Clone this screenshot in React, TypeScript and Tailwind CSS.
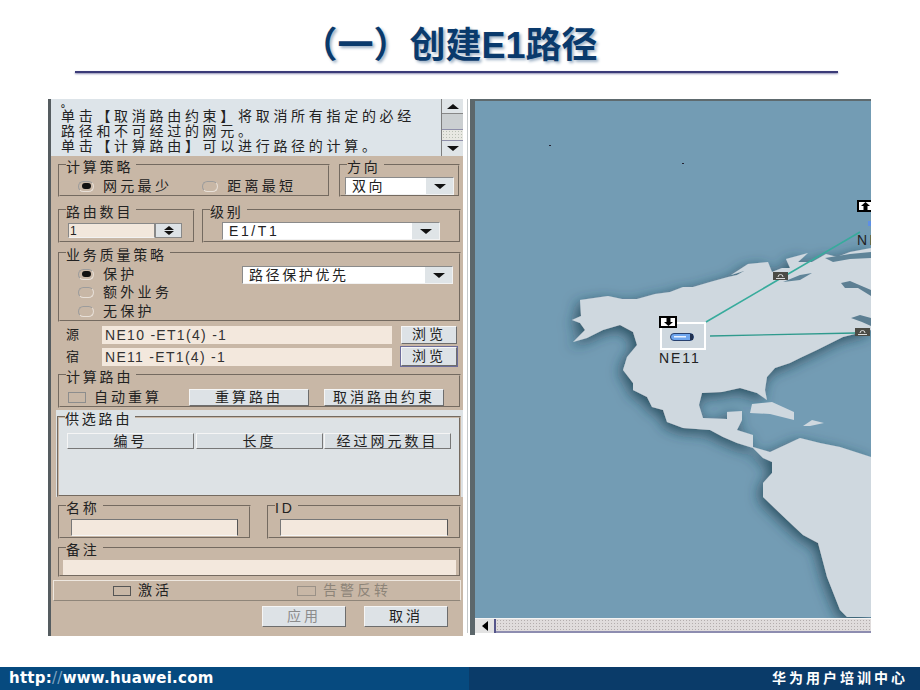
import type { ReactNode } from "react";

const cjk = "font-['Liberation_Sans','Noto_Sans_CJK_SC',sans-serif]";

function Caret() {
  return <span className="block w-0 h-0 border-x-[6px] border-x-transparent border-t-[5px] border-t-[#111]" />;
}

function Group({ label, className, children }: { label: string; className: string; children?: ReactNode }) {
  return (
    <fieldset className={`border-2 border-[#c8b7a6] [border-style:groove] ${className}`}>
      <legend className="relative top-[2px] ml-[6px] pr-[3px] text-[14px] leading-[14px] tracking-[2.8px] text-[#222]">{label}</legend>
      {children}
    </fieldset>
  );
}

function Combo({ value, className }: { value: string; className: string }) {
  return (
    <div className={`flex items-stretch h-[18px] border border-[#8a8a8a] border-b-[#f2f2f2] border-r-[#f2f2f2] bg-white ${className}`}>
      <span className="flex-1 pl-[6px] text-[14px] leading-[16px] tracking-[2.6px] text-[#222]">{value}</span>
      <span className="flex w-[27px] items-center justify-center bg-[#dfe4e7]"><Caret /></span>
    </div>
  );
}

function Radio({ on, label }: { on?: boolean; label: string }) {
  return (
    <div className="flex h-[18.5px] items-center gap-[9px]">
      <span className="flex h-[11px] w-[16px] items-center justify-center rounded-full border border-[#9c9c9c] border-b-[#e8e0d8] border-r-[#e8e0d8]">
        {on && <span className="h-[6px] w-[9px] rounded-full bg-[#111]" />}
      </span>
      <span className="text-[14px] tracking-[3.3px] text-[#222]">{label}</span>
    </div>
  );
}

function Btn({ label, className, disabled }: { label: string; className: string; disabled?: boolean }) {
  return (
    <div className={`flex items-center justify-center border border-[#f5f5f5] border-b-[#6d6d6d] border-r-[#6d6d6d] bg-[#dde2e6] text-[14px] tracking-[3px] ${disabled ? "text-[#8c8c8c]" : "text-[#222]"} ${className}`}>
      {label}
    </div>
  );
}

function Tag() {
  return (
    <svg width="15" height="8" viewBox="0 0 15 8" className="block">
      <rect width="15" height="8" fill="#4b4b45" />
      <path d="M5 5 a2.5 2.5 0 1 1 5 0 M3 6.5h9" stroke="#ddd" strokeWidth="1" fill="none" />
    </svg>
  );
}

function MapPane() {
  const na =
    "572,320 581,316 580,300 594,298 608,296 622,299 637,299 655,294 670,292 683,287 693,287 710,282 728,277 737,275 744,271 731,275 748,264 768,262 772,272 782,268 790,268 786,259 808,253 798,262 812,262 826,254 837,257 850,252 871,248 871,330 843,337 817,350 800,358 790,363 775,368 767,377 765,390 767,400 757,393 740,388 722,392 702,393 699,405 703,418 727,419 727,412 742,411 742,420 737,430 753,435 753,447 770,452 785,445 800,438 820,443 840,447 871,457 871,617 847,617 840,610 827,577 818,543 803,535 787,520 763,497 763,483 772,473 772,462 763,458 753,448 737,443 723,437 710,430 683,428 667,422 663,410 652,407 647,397 633,390 633,383 623,370 627,357 637,345 633,332 620,325 603,330 587,338 573,342 585,330 580,323";
  return (
    <div className="relative h-[534px] w-[396px] overflow-hidden border-t-[2px] border-t-[#5e6a6e] bg-[#739cb4]">
      <svg viewBox="475 101 396 532" className="absolute inset-0 h-full w-full">
        <defs>
          <filter id="s" x="-20%" y="-20%" width="140%" height="140%">
            <feDropShadow dx="-3" dy="4" stdDeviation="7" floodColor="#1f3a49" floodOpacity="0.8" />
          </filter>
        </defs>
        <polygon points={na} fill="#cfd8df" filter="url(#s)" />
        <polygon points="750,413 752,404 772,402 794,412 794,420 770,414" fill="#cfd8df" />
        <polygon points="803,426 812,420 824,423 810,426" fill="#cfd8df" />
        <polygon points="841,283 850,281 871,290 871,296 858,288 845,288" fill="#5d7f93" />
        <polygon points="851,318 860,315 871,318 871,326 862,322" fill="#5d7f93" />
        <polygon points="825,258 850,254 871,252 871,258 850,259 833,262" fill="#5f8498" />
        <polygon points="783,282 800,275 812,273 800,280" fill="#5f8498" />
        <line x1="706" y1="322" x2="860" y2="232" stroke="#37ab9c" strokeWidth="1.6" />
        <line x1="710" y1="336" x2="856" y2="333" stroke="#2f9a8d" strokeWidth="1.3" />
        <rect x="549" y="145" width="2" height="1" fill="#223" />
        <rect x="682" y="163" width="2" height="1" fill="#223" />
      </svg>
      <div className="absolute left-[298px] top-[171px]"><Tag /></div>
      <div className="absolute left-[380px] top-[227px]"><Tag /></div>

      <div className="absolute left-[382px] top-[99px] flex h-[12px] w-[16px] items-center justify-center border-2 border-black bg-white">
        <svg width="9" height="8" viewBox="0 0 9 8"><path d="M4.5 0 L9 4 H6.5 V8 H2.5 V4 H0 Z" fill="#000" /></svg>
      </div>
      <div className="absolute left-[393px] top-[120px] h-[5px] w-[4px] bg-[#5d8fe6]" />
      <div className="absolute left-[382px] top-[129px] text-[14px] tracking-[2.5px] text-[#222] font-['Liberation_Sans',sans-serif]">NE</div>

      <div className="absolute left-[185px] top-[221px] flex h-[28px] w-[46px] items-center justify-center border-2 border-white">
        <svg width="24" height="8" viewBox="0 0 24 8" className="ml-[-2px] mt-[2px]">
          <rect x="0.5" y="0.5" width="23" height="7" rx="3.5" fill="#6fa6ee" stroke="#27406e" />
          <rect x="4" y="3" width="12" height="1.5" fill="#e8f2ff" />
          <rect x="20" y="1" width="3" height="6" fill="#20304f" />
        </svg>
      </div>
      <div className="absolute left-[184px] top-[215px] flex h-[12px] w-[18px] items-center justify-center border-2 border-black bg-white">
        <svg width="9" height="8" viewBox="0 0 9 8"><path d="M4.5 8 L9 4 H6.5 V0 H2.5 V4 H0 Z" fill="#000" /></svg>
      </div>
      <div className="absolute left-[184px] top-[247px] text-[14px] tracking-[1.9px] text-[#222] font-['Liberation_Sans',sans-serif]">NE11</div>

      <div className="absolute inset-x-0 bottom-0 flex h-[15px] border-t border-[#f3f3f3] bg-[#d8d4d4]">
        <div className="flex w-[21px] items-center justify-center border-r-2 border-r-[#55558a] bg-[#e3e3e3]">
          <span className="block h-0 w-0 border-y-[5px] border-r-[6px] border-y-transparent border-r-black" />
        </div>
        <div className="flex-1 border-b-2 border-b-[#8d8db0] bg-[radial-gradient(#b3adad_1px,#e0dcdc_1px)] bg-[length:3px_3px]" />
      </div>
    </div>
  );
}

function Panel() {
  return (
    <div className="flex h-[537px] w-[415px] flex-col border-l-[3px] border-l-[#555c60] bg-[#c8b7a6] text-[#222]">
      <div className="flex h-[57px] bg-[#dde4e9]">
        <div className="flex-1 overflow-hidden pl-[10px] text-[14px] leading-[15px] tracking-[3.7px] text-[#222]">
          <div className="h-[10px] text-[10px] font-bold leading-[10px]">。</div>
          <div>单击【取消路由约束】将取消所有指定的必经</div>
          <div>路径和不可经过的网元。</div>
          <div>单击【计算路由】可以进行路径的计算。</div>
        </div>
        <div className="flex w-[22px] flex-col border-l border-[#7d7d7d] bg-[#dfe4e7]">
          <div className="flex h-[15px] items-center justify-center border-b border-[#888]">
            <span className="block h-0 w-0 border-x-[6px] border-b-[5px] border-x-transparent border-b-[#111]" />
          </div>
          <div className="h-[15px] bg-[#cbcfd1]" />
          <div className="h-[12px] border-y border-[#8f8faa] bg-[radial-gradient(#b9bfb4_1px,#e8e8e2_1px)] bg-[length:3px_3px]" />
          <div className="flex flex-1 items-center justify-center"><Caret /></div>
        </div>
      </div>

      <div className="mt-[2px] flex gap-[9px] pl-[7px] pr-[2px]">
        <Group label="计算策略" className="h-[39px] w-[272px]">
          <div className="flex gap-[30px] pl-[18px] pt-[5px]"><Radio on label="网元最少" /><Radio label="距离最短" /></div>
        </Group>
        <Group label="方向" className="h-[39px] w-[121px]">
          <div className="pl-[4px] pr-[4px] pt-[5px]"><Combo value="双向" className="" /></div>
        </Group>
      </div>

      <div className="mt-[6px] flex gap-[7px] pl-[7px] pr-[2px]">
        <Group label="路由数目" className="h-[40px] w-[137px]">
          <div className="flex pl-[8px] pt-[6px]">
            <span className="h-[15px] w-[87px] border border-[#888] border-b-[#f2f2f2] bg-[#f2e7dc] pl-[1px] text-[12px] leading-[14px] font-['Liberation_Sans',sans-serif]">1</span>
            <span className="flex h-[15px] w-[27px] flex-col items-center justify-center gap-[1px] border border-[#888] bg-[#dde2e6]">
              <span className="block h-0 w-0 border-x-[5px] border-b-[4px] border-x-transparent border-b-[#111]" />
              <span className="block h-0 w-0 border-x-[5px] border-t-[4px] border-x-transparent border-t-[#111]" />
            </span>
          </div>
        </Group>
        <Group label="级别" className="h-[40px] w-[259px]">
          <div className="pl-[18px] pr-[19px] pt-[5px]"><Combo value="E1/T1" className="" /></div>
        </Group>
      </div>

      <div className="mt-[3px] pl-[7px] pr-[2px]">
        <Group label="业务质量策略" className="h-[76px] w-[403px]">
          <div className="flex items-start pl-[18px] pr-[6px]">
            <div className="flex w-[164px] flex-col pt-[5px]">
              <Radio on label="保护" /><Radio label="额外业务" /><Radio label="无保护" />
            </div>
            <Combo value="路径保护优先" className="flex-1 mt-[6px]" />
          </div>
        </Group>
      </div>

      <div className="mt-[3px] flex h-[19px] items-center pl-[15px]">
        <span className="w-[36px] text-[13px]">源</span>
        <span className="h-[18px] w-[290px] bg-[#f3e8dd] pl-[3px] text-[14px] leading-[18px] tracking-[1.3px] text-[#333] font-['Liberation_Sans',sans-serif]">NE10 -ET1(4) -1</span>
        <Btn label="浏览" className="ml-[9px] h-[18px] w-[56px]" />
      </div>
      <div className="mt-[3px] flex h-[19px] items-center pl-[15px]">
        <span className="w-[36px] text-[13px]">宿</span>
        <span className="h-[18px] w-[290px] bg-[#f3e8dd] pl-[3px] text-[14px] leading-[18px] tracking-[1.3px] text-[#333] font-['Liberation_Sans',sans-serif]">NE11 -ET1(4) -1</span>
        <Btn label="浏览" className="ml-[9px] h-[19px] w-[56px] outline outline-1 outline-[#6d6d9a]" />
      </div>

      <div className="mt-[2px] pl-[7px]">
        <Group label="计算路由" className="h-[40px] w-[403px]">
          <div className="flex items-center pl-[8px] pt-[5px]">
            <span className="h-[11px] w-[18px] border border-[#8d8d8d]" />
            <span className="ml-[8px] w-[95px] text-[14px] tracking-[3px]">自动重算</span>
            <Btn label="重算路由" className="h-[17px] w-[120px]" />
            <Btn label="取消路由约束" className="ml-[15px] h-[17px] w-[120px]" />
          </div>
        </Group>
      </div>

      <div className="ml-[5px] mt-[2px] w-[407px] bg-[#dde2e5] px-[1px]">
        <Group label="供选路由" className="h-[87px] w-[404px]">
          <div className="mt-[9px] flex pl-[8px]">
            <div className="flex h-[16px] w-[127px] items-center justify-center border border-[#f5f5f5] border-b-[#777] border-r-[#777] bg-[#d9dfe3] text-[14px] tracking-[3px]">编号</div>
            <div className="ml-[2px] flex h-[16px] w-[127px] items-center justify-center border border-[#f5f5f5] border-b-[#777] border-r-[#777] bg-[#d9dfe3] text-[14px] tracking-[3px]">长度</div>
            <div className="ml-[1px] flex h-[16px] w-[127px] items-center justify-center border border-[#f5f5f5] border-b-[#777] border-r-[#777] bg-[#d9dfe3] text-[14px] tracking-[3px]">经过网元数目</div>
          </div>
        </Group>
      </div>

      <div className="mt-[2px] flex gap-[16px] pl-[7px]">
        <Group label="名称" className="h-[40px] w-[193px]">
          <div className="px-[11px] pt-[6px]"><div className="h-[17px] border border-[#777] border-b-[#f5f5f5] border-r-[#555] bg-[#f3e8dd]" /></div>
        </Group>
        <Group label="ID" className="h-[40px] w-[194px]">
          <div className="px-[11px] pt-[6px]"><div className="h-[17px] border border-[#777] border-b-[#f5f5f5] border-r-[#555] bg-[#f3e8dd]" /></div>
        </Group>
      </div>

      <div className="mt-[2px] pl-[7px]">
        <Group label="备注" className="h-[36px] w-[403px]">
          <div className="px-[3px] pt-[5px]"><div className="h-[15px] bg-[#f3e8dd]" /></div>
        </Group>
      </div>

      <div className="mx-[2px] mt-[3px] flex h-[21px] items-center border border-[#eee7df] border-b-[#8f8579]">
        <span className="ml-[59px] h-[10px] w-[18px] border border-[#555]" />
        <span className="ml-[7px] w-[159px] text-[14px] tracking-[3px]">激活</span>
        <span className="h-[10px] w-[19px] border border-[#9a9187]" />
        <span className="ml-[7px] text-[14px] tracking-[3px] text-[#8d8478]">告警反转</span>
      </div>

      <div className="mt-[5px] flex pl-[211px]">
        <Btn label="应用" disabled className="h-[21px] w-[84px]" />
        <Btn label="取消" className="ml-[18px] h-[21px] w-[84px]" />
      </div>
    </div>
  );
}

export default function App() {
  return (
    <div className={`flex h-[690px] w-[920px] flex-col overflow-hidden bg-white ${cjk}`}>
      <div className="flex h-[71px] items-end justify-center pb-[3px] pr-[21px]">
        <h1 className="text-[36px] font-bold leading-[44px] text-[#0a3a6c] [text-shadow:2px_2px_3px_#9fb2c6]">（一）创建E1路径</h1>
      </div>
      <div className="ml-[75px] h-[2px] w-[763px] bg-[#3b3b78] shadow-[0_1px_2px_#8a8ab0]" />
      <div className="ml-[48px] mt-[26px] flex items-start">
        <Panel />
        <div className="ml-[4px] h-[534px] w-[1px] bg-[#c4c8ca]" />
        <div className="ml-[2px] h-[536px] w-[5px] bg-[#5c676b]" />
        <MapPane />
      </div>
      <div className="mt-auto flex h-[23px] items-center justify-between bg-[linear-gradient(90deg,#064a7f_0%,#064a7f_51%,#0a3b69_51%,#0a3b69_100%)] pl-[9px] pr-[12px] text-white">
        <span className="text-[15px] font-bold tracking-[0.25px] font-['DejaVu_Sans',sans-serif]">http:<span className="font-normal text-[#7fa3c0]">//</span>www.huawei.com</span>
        <span className="text-[14px] font-bold tracking-[3px]">华为用户培训中心</span>
      </div>
    </div>
  );
}
